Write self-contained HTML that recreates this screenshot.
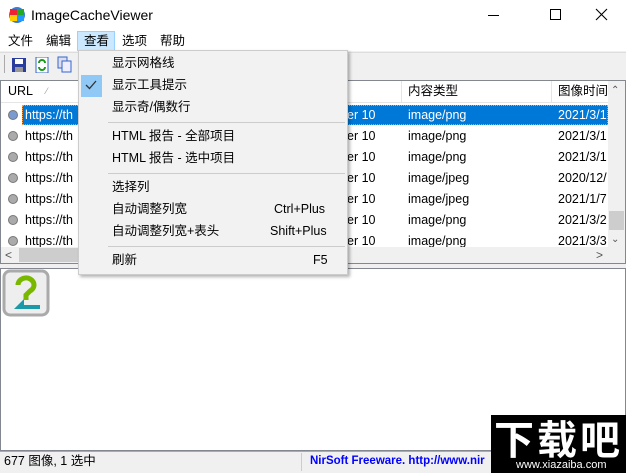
<!DOCTYPE html>
<html><head><meta charset="utf-8"><style>
*{margin:0;padding:0;box-sizing:border-box}
body{width:626px;height:473px;overflow:hidden;background:#f0f0f0;font-family:"Liberation Sans","Noto Sans CJK SC",sans-serif;font-size:12.5px;color:#000;position:relative}
.abs{position:absolute}
.t{white-space:nowrap;line-height:16px}
</style></head><body>
<div class="abs" style="left:0;top:0;width:626px;height:31px;background:#fff"></div>
<svg class="abs" style="left:8px;top:6px" width="18" height="18" viewBox="0 0 18 18"><circle cx="9" cy="9" r="8" fill="#3a7bd5"/><rect x="2" y="3" width="7" height="6" fill="#e23"/><rect x="9" y="3" width="7" height="6" fill="#2a2"/><rect x="2" y="9" width="7" height="6" fill="#fc0"/><rect x="9" y="9" width="7" height="6" fill="#29f"/></svg>
<div class="abs t" style="left:31px;top:7px;font-size:14px">ImageCacheViewer</div>
<div class="abs" style="left:488px;top:15px;width:11px;height:1px;background:#000"></div>
<div class="abs" style="left:550px;top:9px;width:11px;height:11px;border:1px solid #000"></div>
<svg class="abs" style="left:595px;top:8px" width="13" height="13"><path d="M1 1L12 12M12 1L1 12" stroke="#000" stroke-width="1.1"/></svg>
<div class="abs" style="left:0;top:31px;width:626px;height:20px;background:#fff"></div>
<div class="abs t" style="left:8px;top:33px">文件</div>
<div class="abs t" style="left:46px;top:33px">编辑</div>
<div class="abs" style="left:77px;top:31px;width:38px;height:20px;background:#cce8ff;border:1px solid #99d1ff"></div>
<div class="abs t" style="left:84px;top:33px">查看</div>
<div class="abs t" style="left:122px;top:33px">选项</div>
<div class="abs t" style="left:160px;top:33px">帮助</div>
<div class="abs" style="left:0;top:52px;width:626px;height:24px;background:#f0f0f0;border-top:1px solid #ddd"></div>
<div class="abs" style="left:4px;top:55px;width:1px;height:18px;background:#aaa"></div>
<svg class="abs" style="left:11px;top:57px" width="16" height="16"><rect x="1" y="1" width="14" height="14" fill="#2b3d9c"/><rect x="4" y="2" width="8" height="5" fill="#fff"/><rect x="4" y="10" width="8" height="5" fill="#999"/></svg>
<svg class="abs" style="left:34px;top:57px" width="16" height="16"><rect x="2" y="0" width="12" height="16" fill="#fff" stroke="#36c"/><path d="M5 6a3 3 0 0 1 6 0M11 10a3 3 0 0 1-6 0" stroke="#1a9a1a" stroke-width="2" fill="none"/></svg>
<svg class="abs" style="left:57px;top:56px" width="16" height="17"><rect x="1" y="1" width="9" height="11" fill="#dde" stroke="#36c"/><rect x="5" y="5" width="9" height="11" fill="#eef" stroke="#36c"/></svg>
<div class="abs" style="left:0;top:80px;width:626px;height:184px;background:#fff;border:1px solid #828790"></div>
<div class="abs" style="left:1px;top:81px;width:607px;height:22px;background:#fff;border-bottom:1px solid #e5e5e5"></div>
<div class="abs t" style="left:8px;top:83px">URL</div>
<div class="abs t" style="left:46px;top:83px;color:#999;font-size:9px">⁄</div>
<div class="abs" style="left:401px;top:81px;width:1px;height:22px;background:#e5e5e5"></div>
<div class="abs" style="left:551px;top:81px;width:1px;height:22px;background:#e5e5e5"></div>
<div class="abs t" style="left:408px;top:83px">内容类型</div>
<div class="abs t" style="left:558px;top:83px">图像时间</div>
<div class="abs" style="left:22px;top:105px;width:586px;height:20px;background:#0078d7;border:1px dotted #f0a050"></div>
<div id="rows"></div>
<div class="abs" style="left:608px;top:81px;width:17px;height:166px;background:#f0f0f0"></div>
<div class="abs t" style="left:611px;top:83px;font-size:10px;color:#555">&#8963;</div>
<div class="abs" style="left:609px;top:211px;width:15px;height:19px;background:#cdcdcd"></div>
<div class="abs t" style="left:611px;top:232px;font-size:10px;color:#555">&#8964;</div>
<div class="abs" style="left:1px;top:247px;width:624px;height:16px;background:#f0f0f0"></div>
<div class="abs" style="left:19px;top:248px;width:230px;height:14px;background:#cdcdcd"></div>
<div class="abs t" style="left:5px;top:247px;font-size:12px;color:#555">&lt;</div>
<div class="abs t" style="left:596px;top:247px;font-size:12px;color:#555">&gt;</div>
<div class="abs" style="left:0;top:268px;width:626px;height:183px;background:#fff;border:1px solid #828790"></div>
<svg class="abs" style="left:2px;top:269px" width="48" height="48"><rect x="2" y="2" width="44" height="44" rx="6" fill="#eee" stroke="#aaa" stroke-width="3"/><path d="M16 16a8 7 0 1 1 12 6l-4 4v5" stroke="#7ab800" stroke-width="5" fill="none"/><path d="M12 40l10-10v6h16v4z" fill="#1a9aa8"/></svg>
<div class="abs" style="left:0;top:451px;width:626px;height:22px;background:#f0f0f0;border-top:1px solid #aaa"></div>
<div class="abs t" style="left:4px;top:453px">677 图像, 1 选中</div>
<div class="abs" style="left:301px;top:453px;width:1px;height:18px;background:#ccc"></div>
<div class="abs t" style="left:310px;top:453px;color:#00f;font-weight:bold;font-size:11.5px">NirSoft Freeware.  http://www.nir</div>
<div class="abs" style="left:491px;top:415px;width:135px;height:58px;background:#000"></div>
<div class="abs t" style="left:494px;top:417px;color:#fff;font-size:40px;line-height:40px;font-weight:bold;letter-spacing:3px;font-family:'Noto Sans CJK SC',sans-serif">下载吧</div>
<div class="abs t" style="left:516px;top:457px;color:#fff;font-size:11px">www.xiazaiba.com</div>
<div class="abs" style="left:78px;top:50px;width:270px;height:225px;background:#f2f2f2;border:1px solid #ccc;box-shadow:2px 2px 3px rgba(0,0,0,.3)"></div>
<div class="abs" style="left:81px;top:75px;width:21px;height:22px;background:#90c8f6"></div>
<svg class="abs" style="left:85px;top:80px" width="12" height="10"><path d="M1 5l3.5 3.5L11 1" stroke="#333" stroke-width="1.3" fill="none"/></svg>
<div class="abs" style="left:108px;top:122px;width:237px;height:1px;background:#ccc"></div>
<div class="abs" style="left:108px;top:173px;width:237px;height:1px;background:#ccc"></div>
<div class="abs" style="left:108px;top:246px;width:237px;height:1px;background:#ccc"></div>
<div class="abs t" style="left:112px;top:55px">显示网格线</div>
<div class="abs t" style="left:112px;top:77px">显示工具提示</div>
<div class="abs t" style="left:112px;top:99px">显示奇/偶数行</div>
<div class="abs t" style="left:112px;top:128px">HTML 报告 - 全部项目</div>
<div class="abs t" style="left:112px;top:150px">HTML 报告 - 选中项目</div>
<div class="abs t" style="left:112px;top:179px">选择列</div>
<div class="abs t" style="left:112px;top:201px">自动调整列宽</div>
<div class="abs t" style="left:274px;top:201px">Ctrl+Plus</div>
<div class="abs t" style="left:112px;top:223px">自动调整列宽+表头</div>
<div class="abs t" style="left:270px;top:223px">Shift+Plus</div>
<div class="abs t" style="left:112px;top:252px">刷新</div>
<div class="abs t" style="left:313px;top:252px">F5</div>
<script>
var types=["image/png","image/png","image/png","image/jpeg","image/jpeg","image/png","image/png"];
var dates=["2021/3/1","2021/3/1","2021/3/1","2020/12/","2021/1/7","2021/3/2","2021/3/3"];
var h="";
for(var i=0;i<7;i++){var y=107+i*21;var c=i==0?"#fff":"#000";
h+='<div class="abs" style="left:8px;top:'+(y+3)+'px;width:10px;height:10px;border-radius:50%;background:'+(i==0?'#7a9ad0':'#aaa')+';border:1px solid #777"></div>';
h+='<div class="abs t" style="left:25px;top:'+y+'px;color:'+c+'">https://th</div>';
h+='<div class="abs t" style="left:347px;top:'+y+'px;color:'+c+'">er 10</div>';
h+='<div class="abs t" style="left:408px;top:'+y+'px;color:'+c+'">'+types[i]+'</div>';
h+='<div class="abs t" style="left:558px;top:'+y+'px;color:'+c+';width:50px;overflow:hidden">'+dates[i]+'</div>';}
document.getElementById("rows").innerHTML=h;
</script>
</body></html>
